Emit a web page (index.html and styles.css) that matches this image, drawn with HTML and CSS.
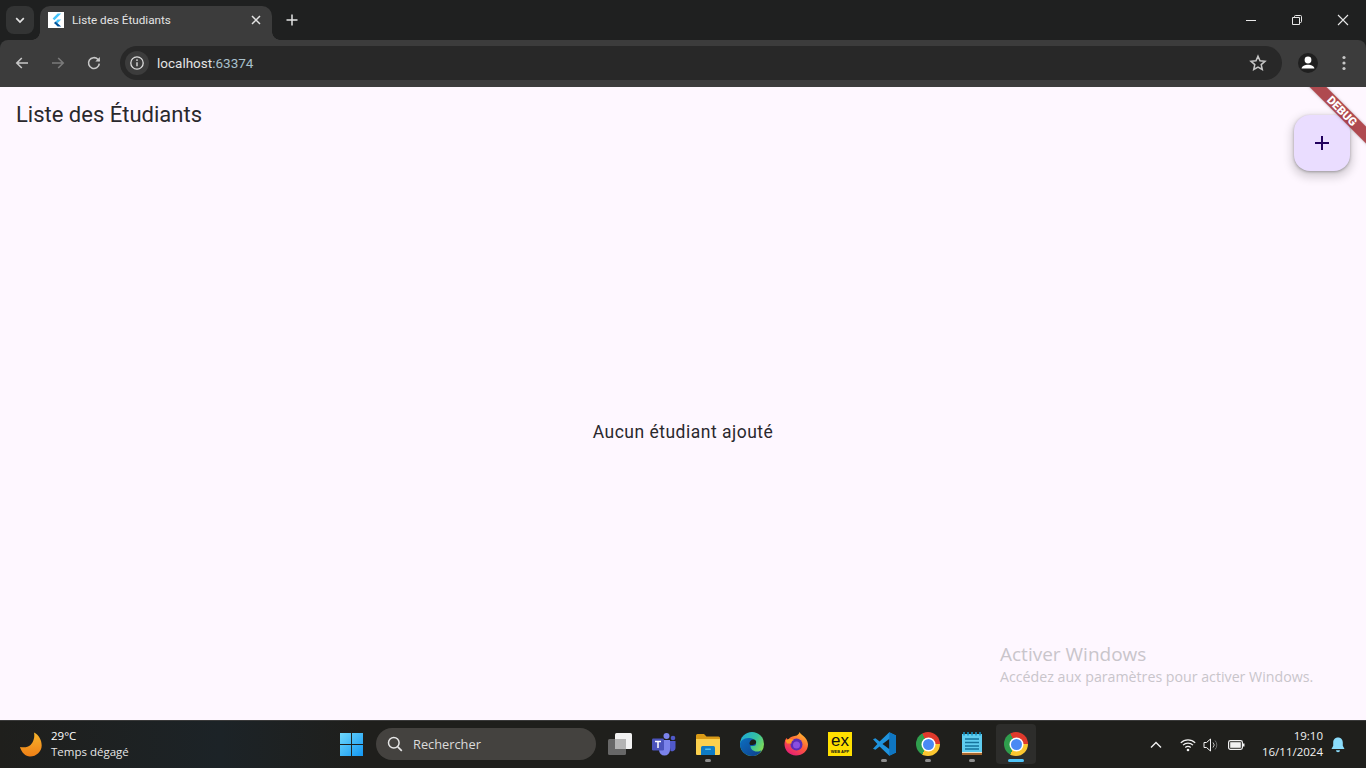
FILE: index.html
```html
<!DOCTYPE html>
<html lang="fr">
<head>
<meta charset="utf-8">
<title>Liste des Étudiants</title>
<link rel="stylesheet" href="styles.css">
</head>
<body>
<div class="screen">
  <header class="browser">
    <div class="tabstrip">
      <button class="tabsearch" aria-label="Rechercher dans les onglets">
        <svg width="16" height="16" viewBox="0 0 16 16"><path d="M4.200 6.200 8 10l3.800-3.800" fill="none" stroke="#e3e3e3" stroke-width="1.700"/></svg>
      </button>
      <div class="tab">
        <span class="favicon">
          <svg width="16" height="16" viewBox="0 0 16 16"><path d="M9.600 1.500h3.600L6.400 8.300 4.600 6.500z" fill="#47c5fb"/><path d="M9.600 7.600h3.600l-3.700 3.700-1.800-1.800z" fill="#47c5fb"/><path d="m7.700 9.500 1.800 1.800 3.700 3.200H9.600L7.700 12.600 5.900 11z" fill="#00569e"/></svg>
        </span>
        <span class="tabtitle">Liste des Étudiants</span>
        <svg class="tabclose" width="12" height="12" viewBox="0 0 12 12"><path d="m2 2 8 8M10 2l-8 8" stroke="#e3e3e3" stroke-width="1.500"/></svg>
      </div>
      <svg class="newtab" width="14" height="14" viewBox="0 0 14 14"><path d="M7 1.500v11M1.500 7h11" stroke="#e3e3e3" stroke-width="1.500"/></svg>
      <div class="winctrls">
        <svg width="46" height="40" viewBox="0 0 46 40"><path d="M18 20.500h10" stroke="#e8e8e8"/></svg>
        <svg width="46" height="40" viewBox="0 0 46 40"><path d="M18.500 17.500h7v7h-7zM20.500 17.500v-1a1 1 0 0 1 1-1h5a1 1 0 0 1 1 1v5a1 1 0 0 1-1 1h-1" fill="none" stroke="#e8e8e8"/></svg>
        <svg width="46" height="40" viewBox="0 0 46 40"><path d="m18 15 10 10M28 15 18 25" stroke="#e8e8e8" stroke-width="1.100"/></svg>
      </div>
    </div>
    <div class="toolbar">
      <svg class="navicon" width="20" height="20" viewBox="0 0 20 20"><path d="M16 10H5M9.800 5 4.800 10l5 5" fill="none" stroke="#c7c7c7" stroke-width="1.600"/></svg>
      <svg class="navicon" width="20" height="20" viewBox="0 0 20 20"><path d="M4 10h11M10.200 5l5 5-5 5" fill="none" stroke="#7a7a7a" stroke-width="1.600"/></svg>
      <svg class="navicon" width="20" height="20" viewBox="0 0 20 20"><path d="M15.300 10.600a5.400 5.400 0 1 1-1.500-4.300L15.500 8" fill="none" stroke="#c7c7c7" stroke-width="1.600"/><path d="M15.900 4v4.600h-4.600z" fill="#c7c7c7"/></svg>
      <div class="omnibox">
        <span class="infochip">
          <svg width="16" height="16" viewBox="0 0 16 16"><circle cx="8" cy="8" r="6.200" fill="none" stroke="#dcdcdc" stroke-width="1.300"/><path d="M8 7.200v4" stroke="#dcdcdc" stroke-width="1.400"/><circle cx="8" cy="5.100" r=".9" fill="#dcdcdc"/></svg>
        </span>
        <span class="url">localhost<span class="urlport">:63374</span></span>
        <svg class="star" width="18" height="18" viewBox="0 0 18 18"><path d="m9 2.200 2 4.600 5 .5-3.800 3.300 1.100 4.900L9 13l-4.300 2.500 1.100-4.900L2 7.300l5-.5z" fill="none" stroke="#c7c7c7" stroke-width="1.500"/></svg>
      </div>
      <span class="avatar">
        <svg width="20" height="20" viewBox="0 0 20 20"><circle cx="10" cy="7" r="3.400" fill="#fff"/><path d="M3.600 15.600c0-2.700 3.600-3.900 6.400-3.900s6.400 1.200 6.400 3.900z" fill="#fff"/></svg>
      </span>
      <svg class="menu" width="4" height="16" viewBox="0 0 4 16"><circle cx="2" cy="2.500" r="1.600" fill="#c7c7c7"/><circle cx="2" cy="8" r="1.600" fill="#c7c7c7"/><circle cx="2" cy="13.500" r="1.600" fill="#c7c7c7"/></svg>
    </div>
  </header>

  <main class="page">
    <div class="appbar"><h1 class="apptitle">Liste des Étudiants</h1></div>
    <div class="content"><p class="empty">Aucun étudiant ajouté</p></div>
    <button class="fab" aria-label="Ajouter">
      <svg width="24" height="24" viewBox="0 0 24 24"><path d="M19 13h-6v6h-2v-6H5v-2h6V5h2v6h6z" fill="#21005d"/></svg>
    </button>
    <div class="debug">DEBUG</div>
    <div class="watermark">
      <div class="wm1">Activer Windows</div>
      <div class="wm2">Accédez aux paramètres pour activer Windows.</div>
    </div>
  </main>

  <footer class="taskbar">
    <div class="weather">
      <svg width="26" height="26" viewBox="0 0 26 26"><defs><linearGradient id="moon" x1="0" y1="0" x2="0" y2="1"><stop offset="0" stop-color="#f7b52c"/><stop offset="1" stop-color="#ef7f16"/></linearGradient></defs><path d="M16 .5C21 3 23.700 8 23.700 13.500 23.700 19.500 18.500 24.500 12 24.500 7.500 24.500 3.500 20.500 2 15 6 15.500 10 15.500 12.500 13 15.500 10 17 5 16 .5z" fill="url(#moon)"/></svg>
      <div class="weathertext">
        <span class="temp">29°C</span>
        <span class="sky">Temps dégagé</span>
      </div>
    </div>
    <div class="taskitems">
      <span class="startbtn">
        <svg width="23" height="23" viewBox="0 0 24 24"><defs><linearGradient id="win" x1="0" y1="0" x2="1" y2="1"><stop offset="0" stop-color="#6fd8fb"/><stop offset="1" stop-color="#1297f3"/></linearGradient></defs><path d="M0 0h11.500v11.500H0zM12.500 0H24v11.500H12.500zM0 12.500h11.500V24H0zM12.500 12.500H24V24H12.500z" fill="url(#win)"/></svg>
      </span>
      <div class="search">
        <svg width="18" height="18" viewBox="0 0 18 18"><circle cx="7.800" cy="7.800" r="5.300" fill="none" stroke="#e6e6e6" stroke-width="1.500"/><path d="m11.800 11.800 4 4" stroke="#e6e6e6" stroke-width="1.700"/></svg>
        <span class="searchtext">Rechercher</span>
      </div>
      <span class="appicon">
        <svg width="24" height="24" viewBox="0 0 24 24"><rect x="7" y="1" width="17" height="16" rx="1.500" fill="#f2f2f2"/><rect x="0" y="7" width="18" height="16" rx="1.500" fill="#6b6b6b" opacity=".95"/><rect x="7" y="7" width="11" height="10" fill="#b4b4b4"/></svg>
      </span>
      <span class="appicon">
        <svg width="24" height="24" viewBox="0 0 24 24"><circle cx="14.500" cy="4" r="3" fill="#7b83eb"/><circle cx="21" cy="6" r="2.300" fill="#5059c9"/><path d="M17 9h6.500v7a3.500 3.500 0 0 1-5 3z" fill="#5059c9"/><path d="M7 8h11v10a5.500 5.500 0 0 1-11 0z" fill="#7b83eb"/><rect x="0" y="6.500" width="12" height="12" rx="1.200" fill="#4b53bc"/><path d="M3 9.500h6M6 9.500v6.500" stroke="#fff" stroke-width="1.500"/></svg>
      </span>
      <span class="appicon running">
        <svg width="24" height="24" viewBox="0 0 24 24"><path d="M0 3.500A1.500 1.500 0 0 1 1.500 2H8l2.500 2.500H22.500A1.500 1.500 0 0 1 24 6v3H0z" fill="#d99a16"/><path d="M0 7h24v15a1 1 0 0 1-1 1H1a1 1 0 0 1-1-1z" fill="#fbd04e"/><path d="M5 15.500A1.500 1.500 0 0 1 6.500 14h11a1.500 1.500 0 0 1 1.500 1.500V23H5z" fill="#0f7bc4"/><rect x="9" y="16.500" width="6" height="1.500" rx=".7" fill="#4fc0f0"/></svg>
      </span>
      <span class="appicon">
        <svg width="24" height="24" viewBox="0 0 24 24"><defs><linearGradient id="edgea" x1="0" y1="0" x2="1" y2=".6"><stop offset="0" stop-color="#1ba6e0"/><stop offset=".6" stop-color="#35c1a0"/><stop offset="1" stop-color="#7fdc57"/></linearGradient><linearGradient id="edgeb" x1="0" y1="0" x2="1" y2="1"><stop offset="0" stop-color="#0c6fc0"/><stop offset="1" stop-color="#0f3f8c"/></linearGradient></defs><circle cx="12" cy="12" r="12" fill="url(#edgea)"/><path d="M0 12c0-3 4-6.500 9.500-6 5 .5 6.500 4 6.500 6 0 1.200-1 2-3 2h-2.500c0 3 2.600 5.500 6.500 5.500 2 0 3-.5 4.500-1.500C20 22 16 24 12 24 5.500 24 0 18.500 0 12z" fill="url(#edgeb)"/><path d="M11 13c-1 0-1.500-.8-1.500-1.800 0-2 2-4.200 4.500-3.700 2 .4 2.500 2.300 2 3.500-.5 1.500-2.500 2-5 2z" fill="#1c1c1a"/></svg>
      </span>
      <span class="appicon">
        <svg width="24" height="24" viewBox="0 0 24 24"><defs><linearGradient id="fox" x1=".8" y1="0" x2=".2" y2="1"><stop offset="0" stop-color="#ffc02e"/><stop offset=".5" stop-color="#ff5b3a"/><stop offset="1" stop-color="#e3187d"/></linearGradient></defs><path d="M15.500 0c1 2 3.500 3.500 5.500 5.500 2.400 2.500 3 5.500 3 7C24 19 18.500 23.500 12 23.500S.5 18.500.5 12C.5 9.500 1.500 7 2.500 6l1.500 2c1-2 2.500-3 4.500-3.500 2.500-.5 6.500-1 7-4.500z" fill="url(#fox)"/><circle cx="12.500" cy="12.500" r="6" fill="#5b2bb5"/><circle cx="12.500" cy="13" r="3.500" fill="#8a4fe0"/><path d="M1.500 8.500C4 6.500 7.500 6.500 10 8c-1.500.5-3 1.800-2.500 3.500H3z" fill="#ff9a27"/></svg>
      </span>
      <span class="appicon">
        <span class="exlogo"><span class="extop">ex</span><span class="exsub">WEB APP</span></span>
      </span>
      <span class="appicon running">
        <svg width="24" height="24" viewBox="0 0 24 24"><path d="M17.300.2 24 3.400v17.200l-6.700 3.200-9.700-9.200-4.200 3.200L1 16.800 5.400 12 1 7.200l2.400-1L7.600 9.400z" fill="#1f93dd"/><path d="M17.500 6.800 10.500 12l7 5.200z" fill="#1c1c1a"/><path d="M17.300.2 24 3.400v17.200l-6.700 3.200z" fill="#0f76c2"/></svg>
      </span>
      <span class="appicon running"><span class="chrome"></span></span>
      <span class="appicon running">
        <svg width="24" height="24" viewBox="0 0 24 24"><rect x="2" y="2" width="20" height="19" fill="#5fcdf0"/><rect x="2" y="20" width="20" height="3" fill="#a8652b"/><rect x="2" y="20" width="20" height="1" fill="#f1e3c8"/><path d="M5 7h14M5 10.500h14M5 14h14M5 17h14" stroke="#15739c" stroke-width="1.600"/><path d="M4 0v3.500M8 0v3.500M12 0v3.500M16 0v3.500M20 0v3.500" stroke="#1593c4" stroke-width="1.500"/></svg>
      </span>
      <span class="appicon active"><span class="chrome"></span></span>
    </div>
    <div class="tray">
      <svg class="traychev" width="12" height="8" viewBox="0 0 12 8"><path d="m1 6.500 5-5 5 5" fill="none" stroke="#f2f2f2" stroke-width="1.400"/></svg>
      <svg class="traywifi" width="16" height="14" viewBox="0 0 16 14"><path d="M.8 4.800a10.200 10.200 0 0 1 14.400 0M3 7.200a7 7 0 0 1 10 0M5.300 9.500a3.800 3.800 0 0 1 5.400 0" fill="none" stroke="#f2f2f2" stroke-width="1.200"/><circle cx="8" cy="12" r="1.300" fill="#f2f2f2"/></svg>
      <svg class="trayvol" width="18" height="16" viewBox="0 0 18 16"><path d="M1 5.500h2.500L7.500 2v12l-4-3.500H1z" fill="none" stroke="#f2f2f2" stroke-width="1"/><path d="M10 5.500a3.500 3.500 0 0 1 0 5" fill="none" stroke="#c0c0c0"/><path d="M12 3.500a6.500 6.500 0 0 1 0 9" fill="none" stroke="#707070"/></svg>
      <svg class="traybat" width="17" height="12" viewBox="0 0 17 12"><rect x=".6" y="1.600" width="13.800" height="8.800" rx="1.800" fill="none" stroke="#f2f2f2" stroke-width="1.200"/><rect x="2.200" y="3.200" width="10.600" height="5.600" fill="#f2f2f2"/><rect x="15" y="4.500" width="1.500" height="3" fill="#f2f2f2"/></svg>
      <div class="clock"><span>19:10</span><span>16/11/2024</span></div>
      <svg class="traybell" width="14" height="16" viewBox="0 0 14 16"><path d="M7 .5c3 0 4.800 2.200 4.800 5v3.200L13.500 12H.5l1.700-3.300V5.500C2.200 2.700 4 .5 7 .5z" fill="#8bdcfb"/><path d="M5 13.200h4a2 2 0 0 1-4 0z" fill="#8bdcfb"/></svg>
    </div>
  </footer>
</div>
</body>
</html>
```

FILE: styles.css
```css
* { box-sizing: border-box; }
html, body { margin: 0; padding: 0; height: 100%; overflow: hidden; }
.screen { width: 1366px; height: 768px; display: flex; flex-direction: column; font-family: "Open Sans", "Noto Sans", sans-serif; }

/* browser chrome */
.browser { flex: none; height: 87px; background: #1f2020; display: flex; flex-direction: column; }
.tabstrip { height: 40px; display: flex; align-items: flex-start; padding: 6px 0 0 6px; }
.tabsearch { width: 28px; height: 28px; border: 0; padding: 0; border-radius: 8px; background: #333434; display: flex; align-items: center; justify-content: center; }
.tab { position: relative; width: 232px; height: 34px; margin-left: 6px; background: #3c3c3c; border-radius: 10px 10px 0 0; display: flex; align-items: center; padding: 0 10px 6px 8px; }
.tab::before, .tab::after { content: ""; position: absolute; bottom: 0; width: 8px; height: 8px; }
.tab::before { left: -8px; background: radial-gradient(circle at 0 0, transparent 7.5px, #3c3c3c 8px); }
.tab::after { right: -8px; background: radial-gradient(circle at 100% 0, transparent 7.5px, #3c3c3c 8px); }
.favicon { width: 16px; height: 16px; background: #fff; display: block; flex: none; }
.favicon svg { display: block; }
.tabtitle { margin-left: 8px; flex: 1; font-family: Roboto, sans-serif; font-size: 11.7px; color: #e3e3e3; white-space: nowrap; }
.tabclose { flex: none; }
.newtab { margin: 7px 0 0 13px; flex: none; }
.winctrls { margin-left: auto; display: flex; margin-top: -6px; }
.winctrls svg { display: block; }

.toolbar { height: 47px; background: #3c3c3c; border-radius: 8px 8px 0 0; display: flex; align-items: center; padding: 0 20px 1px 12px; position: relative; }
.navicon { flex: none; margin-right: 16px; }
.omnibox { width: 1162px; height: 34px; flex: none; background: #282828; border-radius: 17px; display: flex; align-items: center; padding: 0 15px 0 5px; }
.infochip { width: 24px; height: 24px; border-radius: 12px; background: #3c3c3c; display: flex; align-items: center; justify-content: center; flex: none; }
.url { margin-left: 8px; font-family: Roboto, sans-serif; font-size: 13.5px; color: #e3e3e3; flex: 1; }
.urlport { color: #a8c0cc; }
.star { flex: none; }
.avatar { width: 20px; height: 20px; margin-left: 16px; border-radius: 10px; background: #1f1f1f; display: flex; align-items: center; justify-content: center; flex: none; }
.avatar svg { display: block; }
.menu { margin-left: 24px; flex: none; }

/* flutter page */
.page { flex: 1; position: relative; overflow: hidden; background: #fef7ff; display: flex; flex-direction: column; font-family: Roboto, sans-serif; color: #2a282d; }
.appbar { flex: none; height: 56px; display: flex; align-items: center; padding: 0 16px; }
.apptitle { margin: 0; font-size: 22px; font-weight: 400; line-height: 28px; }
.content { flex: 1; display: flex; align-items: center; justify-content: center; }
.empty { margin: 0; font-size: 17.5px; letter-spacing: .5px; line-height: 24px; }
.fab { position: absolute; top: 28px; right: 16px; width: 56px; height: 56px; padding: 0; border: 0; border-radius: 16px; background: #eaddff; box-shadow: 0 1px 3px rgba(0,0,0,.3), 0 4px 8px 3px rgba(0,0,0,.15); display: flex; align-items: center; justify-content: center; }
.debug { position: absolute; top: 18px; right: -36px; width: 120px; height: 12px; transform: rotate(45deg); background: rgba(150,20,25,.76); box-shadow: 0 0 3px rgba(0,0,0,.25); color: #fff; font-size: 11.5px; font-weight: 900; line-height: 12px; text-align: center; }
.watermark { position: absolute; left: 1000px; top: 554px; color: #c9c5cb; font-family: "Open Sans", sans-serif; white-space: nowrap; }
.wm1 { font-size: 19px; line-height: 26px; }
.wm2 { font-size: 14.2px; line-height: 20px; }

/* windows taskbar */
.taskbar { flex: none; height: 48px; display: flex; align-items: center; border-top: 1px solid #3a3a3a; background: linear-gradient(90deg, #1f1f1c 0, #1c2327 220px, #1f1f1c 360px, #1f1f1c 100%); color: #f2f2f2; }
.weather { width: 331px; flex: none; display: flex; align-items: center; padding-left: 18px; }
.weathertext { margin: 0 0 2px 7px; display: flex; flex-direction: column; font-size: 11.5px; line-height: 16px; }
.temp { color: #fff; }
.sky { color: #e6e6e6; }
.taskitems { display: flex; align-items: center; flex: none; margin-bottom: 1px; }
.startbtn { width: 40px; height: 40px; display: flex; align-items: center; justify-content: center; }
.search { width: 220px; height: 32px; margin: 0 2px 0 5px; border-radius: 16px; background: #44423f; display: flex; align-items: center; padding-left: 10px; }
.searchtext { margin-left: 9px; font-size: 12.8px; color: #dcdcdc; }
.appicon { position: relative; width: 44px; height: 40px; display: flex; align-items: center; justify-content: center; border-radius: 4px; }
.appicon svg { display: block; }
.appicon.running::after { content: ""; position: absolute; left: 19px; bottom: 2px; width: 6px; height: 3px; border-radius: 2px; background: #8e8e8e; }
.appicon.active { width: 40px; margin: 0 2px; background: #2d2d2b; }
.appicon.active::after { content: ""; position: absolute; left: 12px; bottom: 2px; width: 16px; height: 3px; border-radius: 2px; background: #4fc3f7; }
.chrome { display: block; position: relative; width: 24px; height: 24px; border-radius: 50%; background: conic-gradient(#e0392c 0deg 90deg, #fbc62f 90deg 210deg, #2f9e4d 210deg 330deg, #e0392c 330deg 360deg); }
.chrome::after { content: ""; position: absolute; left: 6.5px; top: 6.5px; width: 11px; height: 11px; border-radius: 50%; background: #4a8af4; box-shadow: 0 0 0 1.5px #fff; }
.exlogo { width: 24px; height: 24px; background: #ffe000; color: #111; display: flex; flex-direction: column; align-items: center; font-family: "Liberation Sans", sans-serif; }
.extop { font-size: 17px; font-weight: 400; line-height: 15px; margin-top: 1px; }
.exsub { font-size: 4px; font-weight: 700; line-height: 5px; margin-top: 1px; white-space: nowrap; }
.tray { margin-left: auto; flex: none; display: flex; align-items: center; height: 100%; position: relative; padding-right: 21px; }
.traychev { margin-right: 18px; }
.traywifi { margin-right: 7px; }
.trayvol { margin-right: 6.5px; }
.traybat { margin-right: 17px; }
.clock { display: flex; flex-direction: column; align-items: flex-end; font-size: 11.5px; line-height: 16px; margin: 0 8px 2px 0; }
.traybell { flex: none; }
```
